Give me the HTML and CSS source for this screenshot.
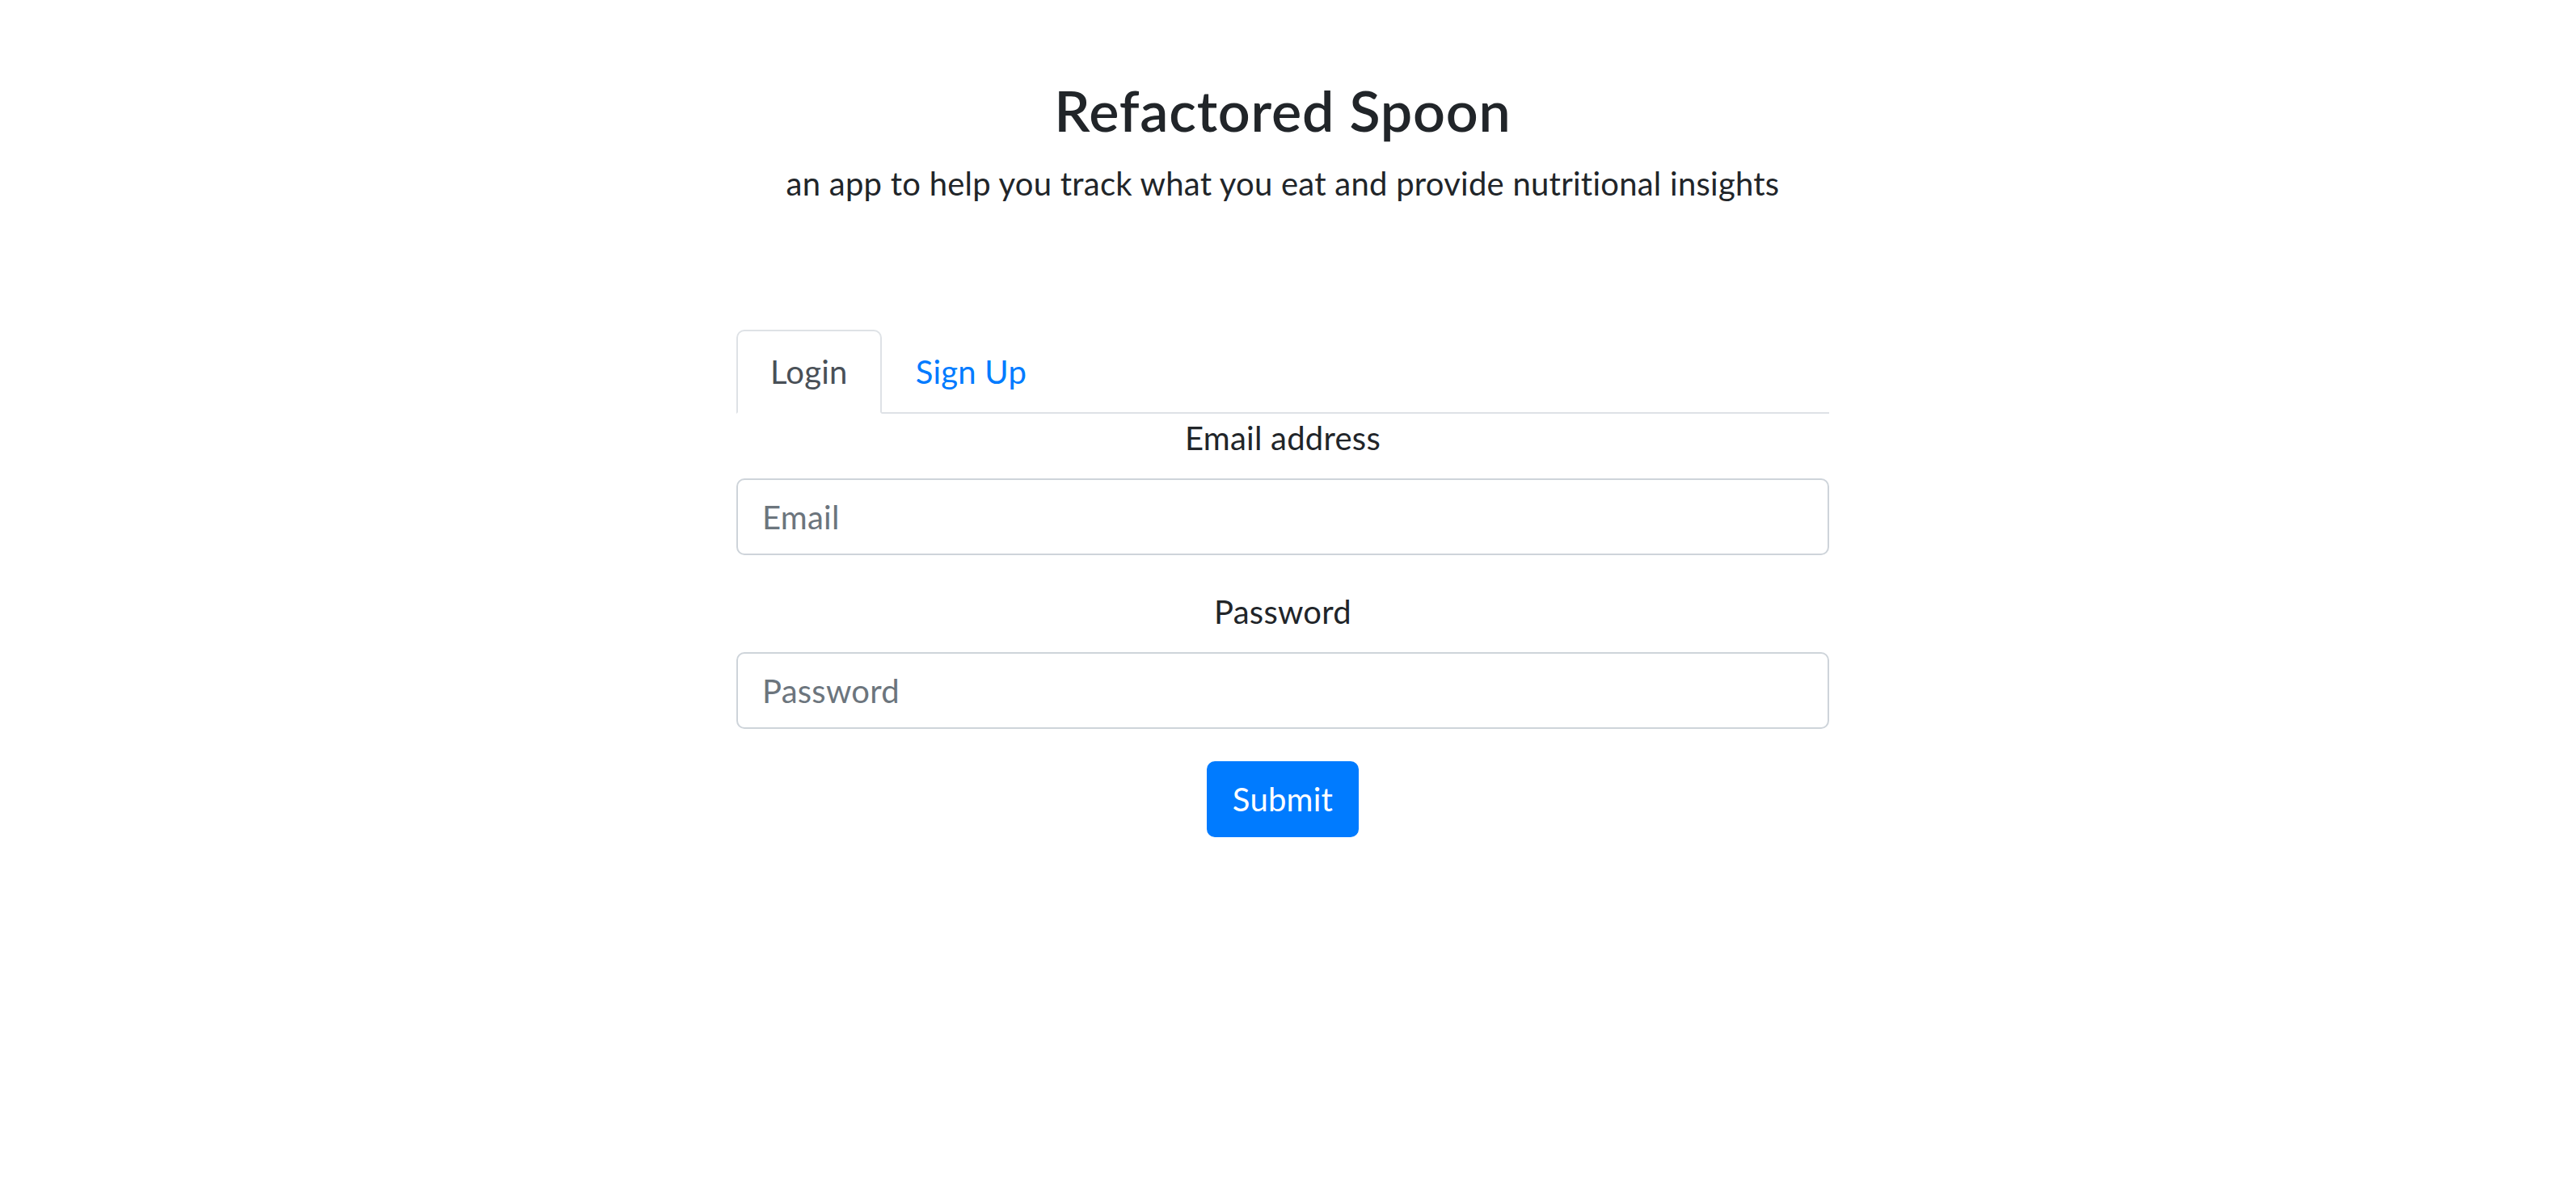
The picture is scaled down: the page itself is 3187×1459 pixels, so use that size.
FILE: index.html
```html
<!DOCTYPE html>
<html lang="en">
<head>
<meta charset="utf-8">
<title>Refactored Spoon</title>
<link rel="stylesheet" href="styles.css">
</head>
<body>
<main class="page">
  <header class="hero">
    <h1 class="title">Refactored Spoon</h1>
    <p class="tagline">an app to help you track what you eat and provide nutritional insights</p>
  </header>
  <section class="auth">
    <nav class="tabs">
      <a class="tab active" href="#login">Login</a>
      <a class="tab" href="#signup">Sign Up</a>
    </nav>
    <form class="form">
      <div class="group">
        <label class="label" for="email">Email address</label>
        <input class="input" id="email" type="email" placeholder="Email">
      </div>
      <div class="group">
        <label class="label" for="password">Password</label>
        <input class="input" id="password" type="password" placeholder="Password">
      </div>
      <div class="actions">
        <button class="btn" type="submit">Submit</button>
      </div>
    </form>
  </section>
</main>
</body>
</html>
```
FILE: styles.css
```css
* {
  box-sizing: border-box;
}

html, body {
  background: #ffffff;
}

body {
  margin: 0;
  padding-right: 13px;
  font-family: "Lato", "Noto Sans", "Liberation Sans", sans-serif;
  font-size: 40px;
  line-height: 60px;
  letter-spacing: 0.25px;
  font-variant-ligatures: none;
  color: #212529;
}

.page {
  padding-top: 94px;
}

.hero {
  text-align: center;
}

.title {
  margin: 0 0 19px;
  font-size: 70px;
  font-weight: 600;
  line-height: 84px;
  letter-spacing: 0.8px;
  color: #212529;
}

.tagline {
  margin: 0;
  font-size: 40px;
  line-height: 60px;
}

.auth {
  width: 1352px;
  margin: 151px auto 0;
}

.tabs {
  display: flex;
  border-bottom: 2px solid #dee2e6;
}

.tab {
  display: block;
  padding: 20px 40px;
  margin-bottom: -2px;
  border: 2px solid transparent;
  border-top-left-radius: 10px;
  border-top-right-radius: 10px;
  color: #007bff;
  text-decoration: none;
  line-height: 60px;
}

.tab.active {
  color: #495057;
  background: #ffffff;
  border-color: #dee2e6 #dee2e6 #ffffff;
}

.group {
  margin-bottom: 40px;
}

.label {
  display: block;
  margin-bottom: 20px;
  text-align: center;
  line-height: 60px;
}

.input {
  display: block;
  width: 100%;
  height: 95px;
  padding: 15px 30px;
  font-family: inherit;
  font-size: 40px;
  line-height: 60px;
  letter-spacing: 0.25px;
  color: #495057;
  background: #ffffff;
  border: 2px solid #ced4da;
  border-radius: 10px;
  outline: none;
}

.input::placeholder {
  color: #6c757d;
  opacity: 1;
}

.actions {
  display: flex;
  justify-content: center;
}

.btn {
  padding: 15px 30px;
  font-family: inherit;
  font-size: 40px;
  line-height: 60px;
  letter-spacing: 0.25px;
  color: #ffffff;
  background: #007bff;
  border: 2px solid #007bff;
  border-radius: 10px;
  cursor: pointer;
}
```
